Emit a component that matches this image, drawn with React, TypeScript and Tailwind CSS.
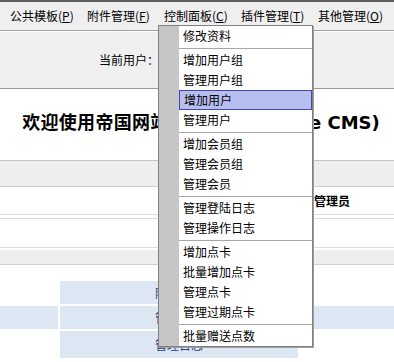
import React from 'react';

const cjk = { fontFamily: '"Noto Sans CJK SC", "DejaVu Sans", sans-serif' };

const menus = [
  { label: '公共模板', key: 'P' },
  { label: '附件管理', key: 'F' },
  { label: '控制面板', key: 'C' },
  { label: '插件管理', key: 'T' },
  { label: '其他管理', key: 'O' },
];

const groups: string[][] = [
  ['修改资料'],
  ['增加用户组', '管理用户组', '增加用户', '管理用户'],
  ['增加会员组', '管理会员组', '管理会员'],
  ['管理登陆日志', '管理操作日志'],
  ['增加点卡', '批量增加点卡', '管理点卡', '管理过期点卡'],
  ['批量赠送点数'],
];

function Dropdown() {
  return (
    <div className="absolute left-[158px] top-[25px] w-[155px] flex border border-[#808080] bg-white shadow-[1px_1px_0_#a0a0a0]">
      <div className="w-[20px] bg-[#c6c6c6] shrink-0" />
      <div className="flex-1 flex flex-col">
        {groups.map((g, gi) => (
          <React.Fragment key={gi}>
            {gi > 0 && (
              <div className="h-[4px] flex items-center">
                <div className="h-px w-full bg-[#a6a6a6]" />
              </div>
            )}
            {g.map(item => (
              <div
                key={item}
                className={`h-[20px] flex items-center pl-[4px] text-[12px] text-black ${
                  item === '增加用户' ? 'bg-[#b7bff0] border border-[#3d4aa6] pl-[3px]' : ''
                }`}
              >
                {item}
              </div>
            ))}
          </React.Fragment>
        ))}
      </div>
    </div>
  );
}

export default function App() {
  return (
    <div className="relative w-[394px] h-[362px] overflow-hidden bg-white" style={cjk}>
      {/* Menu bar */}
      <div className="h-[30px] border-t-2 border-[#5c5c5c] bg-[#efefef] flex items-center pl-[2px]">
        {menus.map(m => (
          <div key={m.key} className="px-[8px] text-[12px] text-black leading-none w-[77px] whitespace-nowrap">
            {m.label}(<span className="underline">{m.key}</span>)
          </div>
        ))}
      </div>

      {/* Current user bar */}
      <div className="h-[59px] border-t border-[#a0a0a0] border-b border-b-[#9a9a9a] bg-[#f0f0f0] shadow-[inset_0_1px_0_#ffffff] flex items-center pl-[99px]">
        <span className="text-[12px] text-black">当前用户：</span>
      </div>

      {/* Title */}
      <div className="h-[71px] flex items-center justify-center pb-[5px] pl-[8px]">
        <h1 className="text-[18px] font-bold text-black whitespace-nowrap tracking-[0.3px]">
          欢迎使用帝国网站管理系统
          <span className="tracking-normal" style={{ fontFamily: '"DejaVu Sans", sans-serif' }}>(Empire CMS)</span>
        </h1>
      </div>

      {/* Info table */}
      <div className="border-t border-[#c4c4c4] h-[27px] bg-[#eeeeee] border-b border-b-[#d0d0d0]" />
      <div className="h-[28px] flex items-center justify-end pr-[44px] border-b border-[#dcdcdc]">
        <span className="text-[12px] font-bold text-black">超级管理员</span>
      </div>
      <div className="h-[3px]" />
      <div className="h-[30px] border-t border-[#dcdcdc] border-b border-b-[#dcdcdc]" />
      <div className="h-[2px]" />
      <div className="h-[15px] bg-[#eeeeee] border-b border-[#d0d0d0]" />
      <div className="h-[16px]" />

      {/* Link table */}
      <div className="flex flex-col gap-[2px]">
        <div className="flex gap-[2px] h-[23px]">
          <div className="w-[58px]" />
          <div className="w-[238px] bg-[#dce7f3] flex items-center pl-[95px] text-[12px] text-[#1d3f7d]">附件管理</div>
          <div className="flex-1" />
        </div>
        <div className="flex gap-[2px] h-[23px]">
          <div className="w-[58px] bg-[#dce7f3]" />
          <div className="w-[238px] bg-[#dce7f3] flex items-center pl-[95px] text-[12px] text-[#1d3f7d]">管理用户</div>
          <div className="flex-1 bg-[#dce7f3]" />
        </div>
        <div className="flex gap-[2px] h-[27px]">
          <div className="w-[58px]" />
          <div className="w-[238px] bg-[#dce7f3] flex items-start pt-[7px] pl-[95px] text-[12px] leading-[14px] text-[#1d3f7d]">管理日志</div>
          <div className="flex-1" />
        </div>
      </div>

      <Dropdown />
    </div>
  );
}
